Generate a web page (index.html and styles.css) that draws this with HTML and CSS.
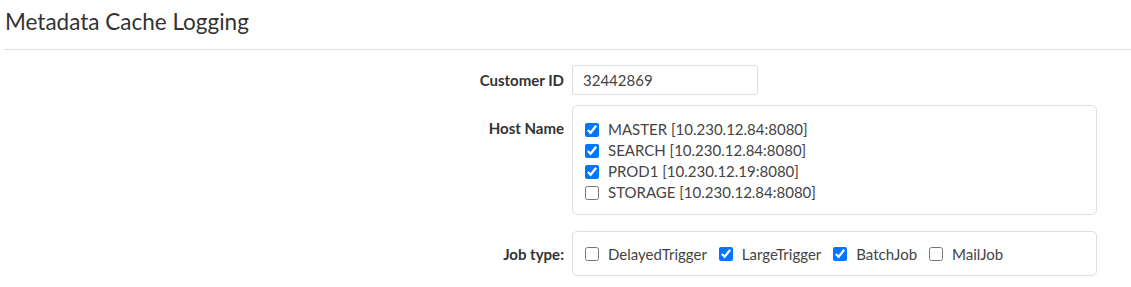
FILE: index.html
```html
<!DOCTYPE html>
<html>
    <head>
        <meta charset="utf-8">
        <title>Metadata Cache Logging</title>
        <link rel="stylesheet" href="styles.css">
    </head>
    <body>
        <div class="page">
            <h1 class="title">Metadata Cache Logging</h1>

            <form class="form">
                <div class="row row-id">
                    <label class="lbl" for="customer">Customer ID</label>
                    <input id="customer" class="txt" type="text" value="32442869">
                </div>

                <div class="row">
                    <label class="lbl lbl-top">Host Name</label>
                    <div class="box box-hosts">
                        <label class="chk"><input type="checkbox" checked> MASTER [10.230.12.84:8080]</label>
                        <label class="chk"><input type="checkbox" checked> SEARCH [10.230.12.84:8080]</label>
                        <label class="chk"><input type="checkbox" checked> PROD1 [10.230.12.19:8080]</label>
                        <label class="chk"><input type="checkbox"> STORAGE [10.230.12.84:8080]</label>
                    </div>
                </div>

                <div class="row row-job">
                    <label class="lbl">Job type:</label>
                    <div class="box box-jobs">
                        <label class="chk"><input type="checkbox"> DelayedTrigger</label>
                        <label class="chk"><input type="checkbox" checked> LargeTrigger</label>
                        <label class="chk"><input type="checkbox" checked> BatchJob</label>
                        <label class="chk"><input type="checkbox"> MailJob</label>
                    </div>
                </div>
            </form>
        </div>
    </body>
</html>
```

FILE: styles.css
```css
*{ padding: 0px; margin: 0px; box-sizing: border-box; }

html, body
{
    background: #fff;
    width: 100%;
    height: 100%;
    font-family: Lato, "Open Sans", sans-serif;
    color: #333;
}

.page
{
    padding-left: 4px;
}

.title
{
    font-size: 22.5px;
    font-weight: normal;
    line-height: 26px;
    padding: 9px 0 0 1px;
    height: 50px;
    border-bottom: 1px solid #dedede;
    color: #333;
}

.form
{
    padding-top: 15px;
}

.row
{
    display: grid;
    grid-template-columns: 560px 525px;
    column-gap: 8px;
    align-items: start;
}

.row-id
{
    align-items: center;
}

.row + .row
{
    margin-top: 10px;
}

.row-job
{
    margin-top: 16px !important;
    align-items: center;
}

.lbl
{
    text-align: right;
    font-size: 15px;
    font-weight: bold;
    color: #333;
}

.lbl-top
{
    padding-top: 14px;
}

.txt
{
    width: 186px;
    height: 30px;
    border: 1px solid #ddd;
    border-radius: 3px;
    padding: 0 10px;
    font: 15px Lato, sans-serif;
    color: #444;
    outline: none;
}

.box
{
    border: 1px solid #dedede;
    border-radius: 5px;
    font-size: 15px;
    color: #444;
}

.box-hosts
{
    display: flex;
    flex-direction: column;
    padding: 13px 12px 12px;
    height: 110px;
}

.box-hosts .chk
{
    line-height: 21px;
    height: 21px;
}

.box-jobs
{
    display: flex;
    align-items: center;
    column-gap: 12px;
    padding: 0 12px;
    height: 45px;
}

.chk
{
    display: flex;
    align-items: center;
    white-space: nowrap;
}

.chk input
{
    width: 14px;
    height: 14px;
    margin: 0 9px 0 0;
    accent-color: #0075ff;
}
```
